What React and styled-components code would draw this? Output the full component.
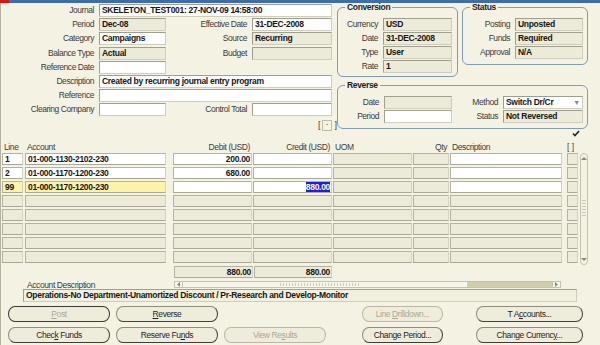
import React from 'react';
import styled, { createGlobalStyle } from 'styled-components';

const GlobalStyle = createGlobalStyle`
  html, body {
    margin: 0;
    padding: 0;
    background: #f4f3e3;
  }
  body {
    font-family: "Liberation Sans", Arial, sans-serif;
  }
`;

const Window = styled.div`
  width: 600px;
  height: 345px;
  overflow: hidden;
  background: #f4f3e3;
  box-shadow: inset 1px 0 0 #b2b1a0;
  color: #161616;
`;

const TitleStrip = styled.div`
  height: 3px;
  background: #3d6db0;
  display: flex;
`;

const RedMark = styled.div`
  width: 9px;
  background: #d81414;
`;

const Header = styled.div`
  display: flex;
  height: 137px;
`;

const MainForm = styled.div`
  width: 337px;
  padding-top: 1px;
`;

const FormGrid = styled.div`
  display: grid;
  grid-template-columns: ${p => p.$cols};
  grid-auto-rows: 13px;
  row-gap: ${p => p.$gap || '1px'};
`;

const Label = styled.div`
  grid-column: ${p => p.$col || 'auto'};
  font-size: 8.5px;
  letter-spacing: -0.45px;
  line-height: 13px;
  color: #3b3b3b;
  text-align: right;
  padding-right: 5px;
  white-space: nowrap;
`;

const Field = styled.div`
  grid-column: ${p => (p.$span ? `span ${p.$span}` : 'auto')};
  box-sizing: border-box;
  height: 13px;
  border: 1px solid;
  border-color: #a09f8c #cfcebc #cfcebc #a09f8c;
  background: ${p => (p.$ro ? '#ecebd9' : '#ffffff')};
  font-size: 8.5px;
  letter-spacing: -0.3px;
  font-weight: bold;
  line-height: 11px;
  padding: 0 2px;
  white-space: nowrap;
  overflow: hidden;
  display: flex;
  justify-content: space-between;
`;

const DropArrow = styled.span`
  font-weight: normal;
  color: #8a8a80;
  font-size: 7px;
`;

const BracketRow = styled.div`
  display: flex;
  justify-content: flex-end;
  align-items: center;
  gap: 2px;
  margin-top: 3.5px;
  font-size: 9px;
  color: #3b3b3b;
`;

const TinyBox = styled.div`
  box-sizing: border-box;
  width: 10px;
  height: 11px;
  border: 1px solid #bdbca9;
  font-size: 9px;
  line-height: 7px;
  padding-left: 2px;
`;

const SidePanels = styled.div`
  width: 251px;
  display: flex;
  flex-direction: column;
`;

const TopPanels = styled.div`
  display: flex;
  align-items: flex-start;
  gap: 4px;
`;

const Group = styled.fieldset`
  box-sizing: border-box;
  width: ${p => p.$w}px;
  margin: ${p => p.$mt || 0}px 0 0;
  padding: 7px 4px ${p => p.$pb}px 0;
  border: 1px solid #7f9bb6;
  border-radius: 6px;
  min-width: 0;
`;

const Legend = styled.legend`
  font-size: 8.5px;
  letter-spacing: -0.35px;
  font-weight: bold;
  line-height: 8px;
  padding: 0 2px;
  margin-left: 7px;
  color: #1a1a1a;
`;

const CheckRow = styled.div`
  display: flex;
  justify-content: flex-end;
  padding-right: 8px;
  margin-top: 1px;
`;

const TableHead = styled.div`
  display: flex;
  height: 13px;
  align-items: center;
`;

const HeadCell = styled.div`
  box-sizing: border-box;
  width: ${p => p.$w}px;
  margin-left: ${p => p.$ml}px;
  text-align: ${p => p.$align || 'left'};
  padding: 0 ${p => (p.$tight ? 0 : 2)}px;
  font-size: 8.5px;
  letter-spacing: ${p => (p.$tight ? 0 : -0.4)}px;
  color: #3b3b3b;
  white-space: nowrap;
`;

const TableBody = styled.div`
  display: flex;
  align-items: flex-start;
`;

const RowsCol = styled.div`
  display: flex;
  flex-direction: column;
  gap: 2px;
`;

const Row = styled.div`
  display: flex;
  height: 12px;
`;

const tones = {
  white: '#ffffff',
  ro: '#ecebd9',
  yellow: '#fdf3a4',
};

const Cell = styled.div`
  box-sizing: border-box;
  width: ${p => p.$w}px;
  margin-left: ${p => p.$ml}px;
  height: 12px;
  border: 1px solid;
  border-color: #b4b3a0 #d4d3c2 #a9a894 #b4b3a0;
  background: ${p => tones[p.$tone]};
  font-size: 8.5px;
  letter-spacing: -0.3px;
  font-weight: bold;
  line-height: 10px;
  padding: 0 1px 0 2px;
  text-align: ${p => p.$align || 'left'};
  white-space: nowrap;
  overflow: hidden;
`;

const Selected = styled.span`
  background: #1c1cf2;
  color: #ffffff;
`;

const ScrollV = styled.div`
  box-sizing: border-box;
  width: 8px;
  height: 112px;
  margin-left: 2px;
  border: 1px solid #c4c3ad;
  border-radius: 4px;
  display: flex;
  flex-direction: column;
  justify-content: space-between;
  align-items: center;
  padding: 2px 0;
`;

const Grip = styled.div`
  width: 4px;
  height: 18px;
  background: repeating-linear-gradient(180deg, #c9c8b2 0 1px, transparent 1px 3px);
`;

const TotalsRow = styled.div`
  display: flex;
  margin-top: 1px;
`;

const AccDescRow = styled.div`
  display: flex;
  align-items: center;
  height: 9px;
  margin-top: 2px;
`;

const SmallLabel = styled.div`
  width: 147px;
  padding-left: 27px;
  font-size: 8.5px;
  letter-spacing: -0.4px;
  color: #3b3b3b;
  white-space: nowrap;
`;

const ScrollH = styled.div`
  box-sizing: border-box;
  width: 387px;
  height: 7px;
  border: 1px solid #c4c3ad;
  display: flex;
  align-items: stretch;
  background: #f7f6ea;
`;

const ArrowBox = styled.div`
  width: 7px;
  display: flex;
  align-items: center;
  justify-content: center;
  border-${p => p.$side}: 1px solid #c4c3ad;
`;

const TrackSpace = styled.div`
  flex: 1;
  display: flex;
  justify-content: center;
  align-items: center;
`;

const HGrip = styled.div`
  width: ${p => p.$w}px;
  height: 3px;
  margin-left: ${p => p.$ml || 0}px;
  background: repeating-linear-gradient(90deg, #cfcdb6 0 1px, transparent 1px 3px);
`;

const Thumb = styled.div`
  width: 85px;
  background: #cfcea8;
`;

const DescBar = styled.div`
  box-sizing: border-box;
  margin-left: 23px;
  width: 554px;
  height: 13px;
  border: 1px solid;
  border-color: #a09f8c #cfcebc #cfcebc #a09f8c;
  background: #f1f0df;
  font-size: 8.5px;
  letter-spacing: -0.3px;
  font-weight: bold;
  line-height: 11px;
  padding-left: 2px;
  white-space: nowrap;
`;

const ButtonGrid = styled.div`
  display: grid;
  grid-template-columns: 102px 102px 102px 111px 134px;
  grid-auto-rows: 16px;
  column-gap: 6px;
  row-gap: 5px;
  padding-left: 8px;
  margin-top: 4px;
`;

const Button = styled.button`
  grid-column: ${p => p.$col || 'auto'};
  justify-self: end;
  width: ${p => (p.$w ? `${p.$w}px` : '100%')};
  height: 16px;
  padding: 0;
  border: 1px solid;
  border-color: ${p => (p.$default ? '#3a3a32' : p.$disabled ? '#b9b8a4' : '#8e8d7c #3f3f36 #3f3f36 #8e8d7c')};
  border-radius: 7px / 8px;
  background: #eeeddc;
  font-family: inherit;
  font-size: 8.5px;
  letter-spacing: -0.4px;
  color: ${p => (p.$disabled ? '#aaa993' : '#1e1e1e')};
  u {
    text-underline-offset: 1px;
  }
`;

const headerCols = [
  { key: 'line', ml: 2, w: 21, head: 'Line' },
  { key: 'acct', ml: 2, w: 141, head: 'Account' },
  { key: 'debit', ml: 7, w: 79, align: 'right', head: 'Debit (USD)' },
  { key: 'credit', ml: 1, w: 79, align: 'right', head: 'Credit (USD)' },
  { key: 'uom', ml: 1, w: 79, head: 'UOM' },
  { key: 'qty', ml: 1, w: 36, align: 'right', head: 'Qty' },
  { key: 'desc', ml: 1, w: 112, head: 'Description' },
  { key: 'flag', ml: 5, w: 11, head: '[ ]', tight: true },
];

const lines = [
  { line: '1', acct: '01-000-1130-2102-230', debit: '200.00' },
  { line: '2', acct: '01-000-1170-1200-230', debit: '680.00' },
  { line: '99', acct: '01-000-1170-1200-230', credit: '880.00', current: true },
  null, null, null, null, null,
];

const editable = ['line', 'acct', 'debit', 'credit', 'desc'];

function toneFor(row, key) {
  if (!row) return 'ro';
  if (row.current && (key === 'line' || key === 'acct')) return 'yellow';
  return editable.includes(key) ? 'white' : 'ro';
}

const CheckMark = () => (
  <svg width="8" height="7" viewBox="0 0 8 7">
    <polyline points="1,3.5 3,5.5 7,1" fill="none" stroke="#222" strokeWidth="1.6" />
  </svg>
);

const Arrow = ({ dir }) => {
  const pts = {
    up: '0,4 3,1 6,4',
    down: '0,1 3,4 6,1',
    left: '4,0 1,2.5 4,5',
    right: '1,0 4,2.5 1,5',
  }[dir];
  const vertical = dir === 'up' || dir === 'down';
  return (
    <svg width={vertical ? 6 : 5} height={5} viewBox={vertical ? '0 0 6 5' : '0 0 5 5'}>
      <polygon points={pts} fill="#8b8a78" />
    </svg>
  );
};

export default function App() {
  return (
    <Window>
      <GlobalStyle />
      <TitleStrip>
        <RedMark />
      </TitleStrip>

      <Header>
        <MainForm>
          <FormGrid $cols="99px 67px 86px 80px" $gap="1.2px">
            <Label $col={1}>Journal</Label>
            <Field $span={3}>SKELETON_TEST001: 27-NOV-09 14:58:00</Field>

            <Label $col={1}>Period</Label>
            <Field $ro>Dec-08</Field>
            <Label>Effective Date</Label>
            <Field>31-DEC-2008</Field>

            <Label $col={1}>Category</Label>
            <Field>Campaigns</Field>
            <Label>Source</Label>
            <Field $ro>Recurring</Field>

            <Label $col={1}>Balance Type</Label>
            <Field $ro>Actual</Field>
            <Label>Budget</Label>
            <Field $ro />

            <Label $col={1}>Reference Date</Label>
            <Field />

            <Label $col={1}>Description</Label>
            <Field $span={3}>Created by recurring journal entry program</Field>

            <Label $col={1}>Reference</Label>
            <Field $span={3} />

            <Label $col={1}>Clearing Company</Label>
            <Field />
            <Label>Control Total</Label>
            <Field />
          </FormGrid>
          <BracketRow>
            <span>[</span>
            <TinyBox>·</TinyBox>
            <span>]</span>
          </BracketRow>
        </MainForm>

        <SidePanels>
          <TopPanels>
            <Group $w={121} $pb={3}>
              <Legend>Conversion</Legend>
              <FormGrid $cols="45px 69px">
                <Label>Currency</Label>
                <Field $ro>USD</Field>
                <Label>Date</Label>
                <Field $ro>31-DEC-2008</Field>
                <Label>Type</Label>
                <Field $ro>User</Field>
                <Label>Rate</Label>
                <Field $ro>1</Field>
              </FormGrid>
            </Group>
            <Group $w={126} $pb={5}>
              <Legend>Status</Legend>
              <FormGrid $cols="52px 68px">
                <Label>Posting</Label>
                <Field $ro>Unposted</Field>
                <Label>Funds</Label>
                <Field $ro>Required</Field>
                <Label>Approval</Label>
                <Field $ro>N/A</Field>
              </FormGrid>
            </Group>
          </TopPanels>

          <Group $w={251} $pb={5} $mt={4}>
            <Legend>Reverse</Legend>
            <FormGrid $cols="46px 68px 51px 80px">
              <Label>Date</Label>
              <Field $ro />
              <Label>Method</Label>
              <Field>
                <span>Switch Dr/Cr</span>
                <DropArrow>▼</DropArrow>
              </Field>
              <Label>Period</Label>
              <Field />
              <Label>Status</Label>
              <Field $ro>Not Reversed</Field>
            </FormGrid>
          </Group>

          <CheckRow>
            <CheckMark />
          </CheckRow>
        </SidePanels>
      </Header>

      <TableHead>
        {headerCols.map(c => (
          <HeadCell key={c.key} $w={c.w} $ml={c.ml} $align={c.align} $tight={c.tight}>
            {c.head}
          </HeadCell>
        ))}
      </TableHead>

      <TableBody>
        <RowsCol>
          {lines.map((row, i) => (
            <Row key={i}>
              {headerCols.map(c => (
                <Cell key={c.key} $w={c.w} $ml={c.ml} $align={c.align} $tone={toneFor(row, c.key)}>
                  {row && c.key === 'credit' && row.current ? (
                    <Selected>{row.credit}</Selected>
                  ) : (
                    row && row[c.key]
                  )}
                </Cell>
              ))}
            </Row>
          ))}
        </RowsCol>
        <ScrollV>
          <Arrow dir="up" />
          <Grip />
          <Arrow dir="down" />
        </ScrollV>
      </TableBody>

      <TotalsRow>
        <Cell $w={79} $ml={174} $align="right" $tone="ro">880.00</Cell>
        <Cell $w={78} $ml={1} $align="right" $tone="ro">880.00</Cell>
      </TotalsRow>

      <AccDescRow>
        <SmallLabel>Account Description</SmallLabel>
        <ScrollH>
          <ArrowBox $side="right">
            <Arrow dir="left" />
          </ArrowBox>
          <TrackSpace>
            <HGrip $w={80} $ml={-10} />
          </TrackSpace>
          <Thumb />
          <ArrowBox $side="left">
            <Arrow dir="right" />
          </ArrowBox>
        </ScrollH>
      </AccDescRow>

      <DescBar>Operations-No Department-Unamortized Discount / Pr-Research and Develop-Monitor</DescBar>

      <ButtonGrid>
        <Button $default $disabled><u>P</u>ost</Button>
        <Button><u>R</u>everse</Button>
        <Button $col={4} $w={81} $disabled>Line <u>D</u>rilldown...</Button>
        <Button $w={107}>T A<u>c</u>counts...</Button>
        <Button>Chec<u>k</u> Funds</Button>
        <Button>Reserve Fu<u>n</u>ds</Button>
        <Button $disabled>View Re<u>s</u>ults</Button>
        <Button $w={81}>Change Period...</Button>
        <Button $w={107}>Change Currenc<u>y</u>...</Button>
      </ButtonGrid>
    </Window>
  );
}
